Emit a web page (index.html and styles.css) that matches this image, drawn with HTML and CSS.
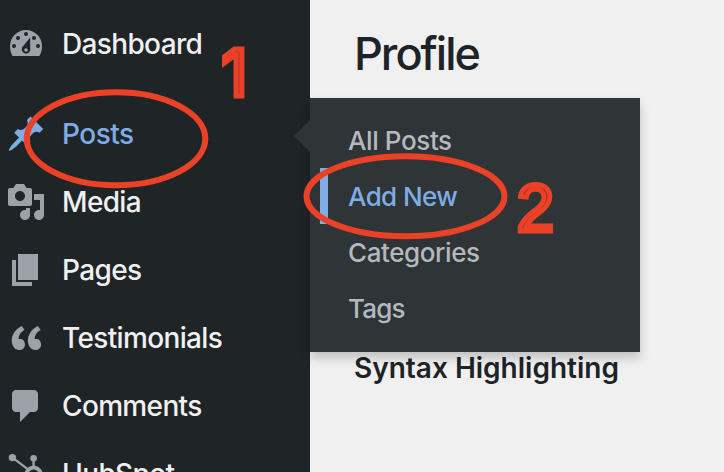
FILE: index.html
```html
<!DOCTYPE html>
<html lang="en">
<head>
<meta charset="utf-8">
<title>Profile</title>
<link rel="stylesheet" href="styles.css">
</head>
<body>
<div class="layout">
  <nav class="sidebar">
    <a class="item dashboard"><svg class="icon" viewBox="0 0 20 20"><path d="M3.3 17h13.4c.85-1.37 1.3-3.1 1.3-5a8 8 0 0 0-16 0c0 1.9.45 3.63 1.3 5z"/><g class="cut"><circle cx="10" cy="6" r="1"/><circle cx="6" cy="8" r="1"/><circle cx="14" cy="8" r="1"/><circle cx="4" cy="12" r="1"/><circle cx="16" cy="12" r="1"/><path d="M12.1 7.8v6.3a2.15 2.15 0 1 1-4-1.5z"/></g><circle cx="10" cy="14" r=".9"/></svg><span>Dashboard</span></a>
    <a class="item posts"><svg class="icon" viewBox="0 0 20 20"><path d="M10.44 3.02l1.82-1.82 6.36 6.35-1.83 1.82c-1.05-.68-2.48-.57-3.41.36l-.75.75c-.92.93-1.04 2.35-.35 3.41l-1.83 1.82-2.41-2.41-2.8 2.79c-.42.42-3.38 2.71-3.8 2.29s1.86-3.39 2.28-3.81l2.79-2.79L4.1 9.36l1.83-1.82c1.05.69 2.48.57 3.4-.36l.75-.75c.93-.92 1.05-2.35.36-3.41z"/></svg><span>Posts</span></a>
    <a class="item media"><svg class="icon" viewBox="0 0 20 20"><path d="M13 11V4c0-.55-.45-1-1-1h-1.67L9 1H5L3.67 3H2c-.55 0-1 .45-1 1v7c0 .55.45 1 1 1h10c.55 0 1-.45 1-1zM7 4.5c1.38 0 2.5 1.12 2.5 2.5S8.38 9.5 7 9.5 4.5 8.38 4.5 7 5.62 4.5 7 4.5zM14 6h5v10.5c0 1.38-1.12 2.5-2.5 2.5S14 17.88 14 16.5s1.12-2.5 2.5-2.5c.17 0 .34.02.5.05V9h-3V6zm-4 8.05V13h2v3.5c0 1.38-1.12 2.5-2.5 2.5S7 17.88 7 16.5 8.12 14 9.5 14c.17 0 .34.02.5.05z"/></svg><span>Media</span></a>
    <a class="item pages"><svg class="icon" viewBox="0 0 20 20"><path d="M6 15V2h10v13H6zm-1 1h8v2H3V5h2v11z"/></svg><span>Pages</span></a>
    <a class="item testimonials"><svg class="icon" viewBox="0 0 20 20"><path d="M9.49 13.22c0-.74-.2-1.38-.61-1.9-.62-.78-1.83-.88-2.53-.72-.29-1.65 1.11-3.75 2.92-4.65L7.88 4c-2.73 1.3-5.42 4.28-4.96 8.05C3.21 14.43 4.59 16 6.54 16c.85 0 1.56-.25 2.12-.75s.83-1.18.83-2.03zm8.05 0c0-.74-.2-1.38-.61-1.9-.63-.78-1.83-.88-2.53-.72-.29-1.65 1.11-3.75 2.92-4.65L15.93 4c-2.73 1.3-5.41 4.28-4.95 8.05.29 2.38 1.66 3.95 3.61 3.95.85 0 1.56-.25 2.12-.75s.83-1.18.83-2.03z"/></svg><span>Testimonials</span></a>
    <a class="item comments"><svg class="icon" viewBox="0 0 20 20"><path d="M5 2h9c1.1 0 2 .9 2 2v7c0 1.1-.9 2-2 2h-2l-5 5v-5H5c-1.1 0-2-.9-2-2V4c0-1.1.9-2 2-2z"/></svg><span>Comments</span></a>
    <a class="item hubspot"><svg class="icon" viewBox="0 0 20 20"><circle cx="3.2" cy="1.8" r="1.85"/><circle cx="13.8" cy="2.1" r="1.65"/><path class="line" d="M3.2 1.8l8 6M13.8 2v5"/><circle class="ring" cx="13.8" cy="10.4" r="3.6"/></svg><span>HubSpot</span></a>
  </nav>
  <main class="content">
    <h1>Profile</h1>
    <h2>Syntax Highlighting</h2>
  </main>
</div>
<div class="submenu">
  <a class="all">All Posts</a>
  <a class="current">Add New</a>
  <a class="categories">Categories</a>
  <a class="tags">Tags</a>
</div>
<svg class="annotations" viewBox="0 0 724 472">
  <ellipse cx="116" cy="138.7" rx="89.3" ry="46.5"/>
  <ellipse cx="405.5" cy="196.3" rx="99" ry="40"/>
  <text class="one" x="221.5" y="96">1</text>
  <text x="516.7" y="231">2</text>
</svg>
</body>
</html>
```

FILE: styles.css
```css
* { box-sizing: border-box; }
body {
  margin: 0;
  width: 724px;
  height: 472px;
  overflow: hidden;
  position: relative;
  background: #f0f0f0;
  font-family: Inter, "Liberation Sans", sans-serif;
  color: #1d2327;
}
.layout { display: flex; height: 472px; overflow: hidden; }
.sidebar { width: 310px; flex: none; padding-top: 10px; background: #1f2427; }
.item {
  display: flex;
  align-items: center;
  gap: 16px;
  height: 68px;
  padding-left: 6px;
  font-size: 28px;
  font-weight: 450;
  color: #f0f0f1;
  white-space: nowrap;
}
.dashboard { margin-bottom: 22px; }
.dashboard .icon { margin-top: -4px; }
.icon { width: 40px; height: 40px; flex: none; fill: #9ca2a7; overflow: visible; }
.cut { fill: #1f2427; }
.line { fill: none; stroke: #9ca2a7; stroke-width: 1.2; }
.ring { fill: none; stroke: #9ca2a7; stroke-width: 2; }
.posts { color: #7eade5; }
.posts .icon { fill: #7eade5; }
.item span { letter-spacing: -0.65px; }
.posts span { letter-spacing: -0.5px; }
.content { padding: 26px 0 0 44px; }
h1 { margin: 0; font-size: 45px; line-height: 56px; font-weight: 450; letter-spacing: -2px; }
h2 { margin: 268px 0 0; font-size: 28px; line-height: 36px; font-weight: 600; letter-spacing: 0; white-space: nowrap; }
.submenu {
  position: absolute;
  left: 310px;
  top: 98px;
  width: 330px;
  height: 254px;
  padding: 14px 0;
  background: #2f3437;
  box-shadow: 0 6px 10px rgba(0, 0, 0, .2);
}
.submenu::before {
  content: "";
  position: absolute;
  left: -16px;
  top: 22px;
  border: 16px solid transparent;
  border-left-width: 0;
  border-right-color: #2f3437;
}
.submenu a {
  display: block;
  height: 56px;
  margin-left: 10px;
  padding-left: 28px;
  line-height: 58px;
  font-size: 26px;
  font-weight: 450;
  color: #b4b9be;
  letter-spacing: -0.4px;
}
.submenu .current { color: #7eade5; border-left: 8px solid #7eade5; padding-left: 20px; letter-spacing: -0.6px; }
.submenu .tags { letter-spacing: -0.8px; }
.annotations { position: absolute; left: 0; top: 0; width: 724px; height: 472px; }
.annotations ellipse { fill: none; stroke: #eb4126; stroke-width: 6; }
.annotations text {
  font-family: "Liberation Sans", sans-serif;
  font-size: 67px;
  fill: #a33427;
  stroke: #eb4126;
  stroke-width: 4.8;
}
.annotations .one { font-family: Inter, sans-serif; font-size: 64px; stroke-width: 5; }
```
